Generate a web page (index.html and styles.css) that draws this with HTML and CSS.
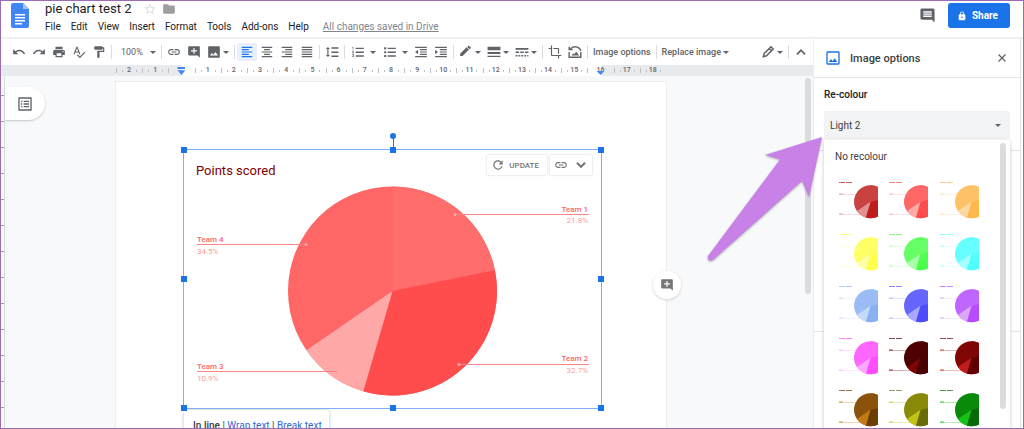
FILE: index.html
```html
<!DOCTYPE html>
<html lang="en">
<head>
	<meta charset="UTF-8">
	<title>pie chart test 2</title>
	<link rel="stylesheet" href="styles.css">
</head>
<body>
	<svg class="sprite" aria-hidden="true">
		<symbol id="undo" viewBox="0 0 24 24"><path d="M12.500 8c-2.650 0-5.050.990-6.900 2.600L2 7v9h9l-3.620-3.620c1.390-1.160 3.160-1.880 5.120-1.880 3.540 0 6.550 2.310 7.600 5.500l2.370-.780C21.080 11.030 17.150 8 12.500 8z"/></symbol>
		<symbol id="redo" viewBox="0 0 24 24"><path d="M18.400 10.600C16.550 8.990 14.150 8 11.500 8c-4.650 0-8.580 3.030-9.960 7.220L3.900 16c1.050-3.190 4.050-5.500 7.600-5.500 1.950 0 3.730.720 5.120 1.880L13 16h9V7l-3.600 3.600z"/></symbol>
		<symbol id="print" viewBox="0 0 24 24"><path d="M19 8H5c-1.660 0-3 1.340-3 3v6h4v4h12v-4h4v-6c0-1.660-1.340-3-3-3zm-3 11H8v-5h8v5zm3-7c-.550 0-1-.450-1-1s.450-1 1-1 1 .450 1 1-.450 1-1 1zm-1-9H6v4h12V3z"/></symbol>
		<symbol id="spell" viewBox="0 0 24 24"><path d="M12.450 16h2.090L9.430 3H7.570L2.460 16h2.090l1.120-3h5.640l1.140 3zm-6.020-5L8.500 5.480 10.570 11H6.430zm15.160.590l-8.090 8.090L9.830 16l-1.410 1.410 5.090 5.090L23 13l-1.410-1.410z"/></symbol>
		<symbol id="paint" viewBox="0 0 24 24"><path d="M18 4V3c0-.550-.450-1-1-1H5c-.550 0-1 .450-1 1v4c0 .550.450 1 1 1h12c.550 0 1-.450 1-1V6h1v4H9v11c0 .550.450 1 1 1h2c.550 0 1-.450 1-1v-9h8V4h-3z"/></symbol>
		<symbol id="link" viewBox="0 0 24 24"><path d="M3.900 12c0-1.710 1.390-3.100 3.100-3.100h4V7H7c-2.760 0-5 2.240-5 5s2.240 5 5 5h4v-1.900H7c-1.710 0-3.100-1.390-3.100-3.100zM8 13h8v-2H8v2zm9-6h-4v1.900h4c1.710 0 3.100 1.390 3.100 3.100s-1.390 3.100-3.100 3.100h-4V17h4c2.760 0 5-2.240 5-5s-2.240-5-5-5z"/></symbol>
		<symbol id="add-comment" viewBox="0 0 24 24"><path d="M22 4c0-1.100-.900-2-2-2H4c-1.100 0-2 .900-2 2v12c0 1.100.900 2 2 2h14l4 4V4zM17 11h-4v4h-2v-4H7V9h4V5h2v4h4v2z"/></symbol>
		<symbol id="comment" viewBox="0 0 24 24"><path d="M22 4c0-1.100-.900-2-2-2H4c-1.100 0-2 .900-2 2v12c0 1.100.900 2 2 2h14l4 4V4zM18 14H6v-2h12v2zm0-3H6V9h12v2zm0-3H6V6h12v2z"/></symbol>
		<symbol id="image" viewBox="0 0 24 24"><path d="M22 20V4c0-1.100-.900-2-2-2H4c-1.100 0-2 .900-2 2v16c0 1.100.900 2 2 2h16c1.100 0 2-.900 2-2zM8.500 13.500l2.500 3L14.500 12l4.500 6H5l3.500-4.500z"/></symbol>
		<symbol id="image-outline" viewBox="0 0 24 24"><path d="M20 4H4v16h16V4zm0-2a2 2 0 0 1 2 2v16a2 2 0 0 1-2 2H4a2 2 0 0 1-2-2V4a2 2 0 0 1 2-2h16zM5.500 18l3.500-4.500 2.500 3 3-4 4 5.500z"/></symbol>
		<symbol id="align-left" viewBox="0 0 24 24"><path d="M3 3h18v2H3zM3 7h12v2H3zM3 11h18v2H3zM3 15h12v2H3zM3 19h18v2H3z"/></symbol>
		<symbol id="align-center" viewBox="0 0 24 24"><path d="M3 3h18v2H3zM7 7h10v2H7zM3 11h18v2H3zM7 15h10v2H7zM3 19h18v2H3z"/></symbol>
		<symbol id="align-right" viewBox="0 0 24 24"><path d="M3 3h18v2H3zM9 7h12v2H9zM3 11h18v2H3zM9 15h12v2H9zM3 19h18v2H3z"/></symbol>
		<symbol id="align-justify" viewBox="0 0 24 24"><path d="M3 3h18v2H3zM3 7h18v2H3zM3 11h18v2H3zM3 15h18v2H3zM3 19h18v2H3z"/></symbol>
		<symbol id="spacing" viewBox="0 0 24 24"><path d="M6 7h2.500L5 3.500 1.500 7H4v10H1.500L5 20.500 8.500 17H6V7zM11 4h12v2.500H11zM11 11h12v2.500H11zM11 18h12v2.500H11z"/></symbol>
		<symbol id="numbers" viewBox="0 0 24 24"><path d="M2 17h2v.500H3v1h1v.500H2v1h3v-4H2v1zm1-9h1V4H2v1h1v3zm-1 3h1.800L2 13.100v.900h3v-1H3.200L5 10.900V10H2v1zM8 4.500h14v2.500H8zM8 11h14v2.500H8zM8 17.500h14V20H8z"/></symbol>
		<symbol id="bullets" viewBox="0 0 24 24"><path d="M2 4h3.500v3.500H2zM2 10.500h3.500V14H2zM2 17h3.500v3.500H2zM8 4.500h14V7H8zM8 11h14v2.500H8zM8 17.500h14V20H8z"/></symbol>
		<symbol id="outdent" viewBox="0 0 24 24"><path d="M2 3h20v2H2zM10 7h12v2H10zM10 11h12v2H10zM10 15h12v2H10zM2 19h20v2H2zM7 8v8l-5-4z"/></symbol>
		<symbol id="indent" viewBox="0 0 24 24"><path d="M2 3h20v2H2zM10 7h12v2H10zM10 11h12v2H10zM10 15h12v2H10zM2 19h20v2H2zM2 8v8l5-4z"/></symbol>
		<symbol id="pencil" viewBox="0 0 24 24"><path d="M2 15v4h4L17 8l-4-4L2 15zM20 5.500c.500-.500.500-1 0-1.500L17.500 1.500c-.500-.500-1-.500-1.500 0l-2 1.800 4 4 2-1.800z"/></symbol>
		<symbol id="pen" viewBox="0 0 24 24"><path d="M4 20l1.500-5.500L17 3l4 4L9.500 18.500zM14 6l4 4" fill="none" stroke="currentColor" stroke-width="2.500"/></symbol>
		<symbol id="weight" viewBox="0 0 24 24"><path d="M1 3h22v6H1zM1 12h22v3.500H1zM1 18.500h22v2H1z"/></symbol>
		<symbol id="dash" viewBox="0 0 24 24"><path d="M1 5h22v3H1zM1 11h6v2.500H1zM9 11h6v2.500H9zM17 11h6v2.500h-6zM1 17h3v2.500H1zM6 17h3v2.500H6zM11 17h3v2.500h-3zM16 17h3v2.500h-3zM21 17h2v2.500h-2z"/></symbol>
		<symbol id="crop" viewBox="0 0 24 24"><path d="M17 15h2V7c0-1.100-.900-2-2-2H9v2h8v8zM7 17V1H5v4H1v2h4v10c0 1.100.900 2 2 2h10v4h2v-4h4v-2H7z"/></symbol>
		<symbol id="reset" viewBox="0 0 24 24"><path d="M2 12v9h20v-9M2 9V3M2 8h6M4 7a10 9 0 0 1 18 3" fill="none" stroke="currentColor" stroke-width="2.400"/><path d="M6 18l3-4 2 2 3-5 5 7z"/></symbol>
		<symbol id="folder" viewBox="0 0 24 24"><path d="M10 4H4c-1.100 0-2 .900-2 2v12c0 1.100.900 2 2 2h16c1.100 0 2-.900 2-2V8c0-1.100-.900-2-2-2h-8l-2-2z"/></symbol>
		<symbol id="star" viewBox="0 0 24 24"><path d="M22 9.240l-7.190-.620L12 2 9.190 8.630 2 9.240l5.460 4.730L5.820 21 12 17.270 18.180 21l-1.630-7.030L22 9.240zM12 15.400l-3.760 2.270 1-4.280-3.320-2.880 4.380-.380L12 6.100l1.710 4.040 4.380.380-3.320 2.880 1 4.280L12 15.400z"/></symbol>
		<symbol id="lock" viewBox="0 0 24 24"><path d="M18 8h-1V6c0-2.760-2.240-5-5-5S7 3.240 7 6v2H6c-1.100 0-2 .900-2 2v10c0 1.100.900 2 2 2h12c1.100 0 2-.900 2-2V10c0-1.100-.900-2-2-2zm-6 9c-1.100 0-2-.900-2-2s.900-2 2-2 2 .900 2 2-.900 2-2 2zm3.100-9H8.900V6c0-1.710 1.390-3.100 3.100-3.100 1.710 0 3.100 1.390 3.100 3.100v2z"/></symbol>
		<symbol id="refresh" viewBox="0 0 24 24"><path d="M17.650 6.350C16.200 4.900 14.210 4 12 4c-4.420 0-8 3.580-8 8s3.580 8 8 8c3.730 0 6.840-2.550 7.730-6h-2.080c-.820 2.330-3.040 4-5.650 4-3.310 0-6-2.690-6-6s2.690-6 6-6c1.660 0 3.140.690 4.220 1.780L13 11h7V4l-2.350 2.350z"/></symbol>
		<symbol id="close" viewBox="0 0 24 24"><path d="M6 6l12 12M18 6L6 18" fill="none" stroke="currentColor" stroke-width="2.200"/></symbol>
		<symbol id="up" viewBox="0 0 24 24"><path d="M5 16l7-7 7 7" fill="none" stroke="currentColor" stroke-width="3"/></symbol>
		<symbol id="down" viewBox="0 0 24 24"><path d="M5 8l7 7 7-7" fill="none" stroke="currentColor" stroke-width="3.500"/></symbol>
		<symbol id="outline" viewBox="0 0 24 24"><path d="M3 3h18v18H3z" fill="none" stroke="currentColor" stroke-width="2"/><path d="M6 7h2v2H6zM6 11h2v2H6zM6 15h2v2H6zM10 7h8v2h-8zM10 11h8v2h-8zM10 15h8v2h-8z"/></symbol>
		<!-- right edge of the pie is cut by the thumbnail -->
		<symbol id="thumb" viewBox="0 0 39 40">
			<circle class="s4" cx="31.500" cy="21.700" r="16.500"/>
			<path class="s1" d="M31.500 21.700V5.200A16.500 16.500 0 0 1 47.700 18.400z"/>
			<path class="s2" d="M31.500 21.700L47.700 18.400A16.500 16.500 0 0 1 26.900 37.500z"/>
			<path class="s3" d="M31.500 21.700L26.900 37.500A16.500 16.500 0 0 1 17.900 31.100z"/>
			<path class="s-title" d="M0 2.500h13"/>
			<path class="s-line" d="M0 14.500h17M0 34.500h22"/>
			<path class="s-name" d="M0 14h4M0 34h4"/>
		</symbol>
	</svg>

	<header class="header">
		<svg class="logo" viewBox="0 0 18 25"><path fill="#4285f4" d="M2 0h10l6 6v17a2 2 0 0 1-2 2H2a2 2 0 0 1-2-2V2a2 2 0 0 1 2-2z"/><path fill="#a1c2fa" d="M12 0l6 6h-6z"/><path fill="#fff" d="M4 11h10v1.500H4zM4 14h10v1.500H4zM4 17h10v1.500H4zM4 20h7v1.500H4z"/></svg>
		<div class="doc">
			<div class="title-row">
				<h1 class="title">pie chart test 2</h1>
				<button class="mark star" aria-label="Star"><svg class="icon"><use href="#star"/></svg></button>
				<button class="mark" aria-label="Move to folder"><svg class="icon"><use href="#folder"/></svg></button>
			</div>
			<nav class="menu">
				<button>File</button>
				<button>Edit</button>
				<button>View</button>
				<button>Insert</button>
				<button>Format</button>
				<button>Tools</button>
				<button>Add-ons</button>
				<button>Help</button>
				<a class="saved" href="#">All changes saved in Drive</a>
			</nav>
		</div>
		<div class="actions">
			<button class="comments" aria-label="Comments"><svg class="icon"><use href="#comment"/></svg></button>
			<button class="share"><svg class="icon"><use href="#lock"/></svg>Share</button>
		</div>
	</header>

	<div class="main">
		<div class="editor">
			<div class="toolbar">
				<button class="tool" aria-label="Undo"><svg class="icon"><use href="#undo"/></svg></button>
				<button class="tool" aria-label="Redo"><svg class="icon"><use href="#redo"/></svg></button>
				<button class="tool" aria-label="Print"><svg class="icon"><use href="#print"/></svg></button>
				<button class="tool" aria-label="Spelling"><svg class="icon"><use href="#spell"/></svg></button>
				<button class="tool" aria-label="Paint format"><svg class="icon"><use href="#paint"/></svg></button>
				<span class="sep"></span>
				<span class="zoom"><select aria-label="Zoom"><option>100%</option></select><i class="caret"></i></span>
				<span class="sep"></span>
				<button class="tool" aria-label="Insert link"><svg class="icon"><use href="#link"/></svg></button>
				<button class="tool" aria-label="Add comment"><svg class="icon"><use href="#add-comment"/></svg></button>
				<button class="tool tool-drop" aria-label="Insert image"><svg class="icon"><use href="#image"/></svg><i class="caret"></i></button>
				<span class="sep"></span>
				<button class="tool active" aria-label="Left align"><svg class="icon"><use href="#align-left"/></svg></button>
				<button class="tool" aria-label="Centre align"><svg class="icon"><use href="#align-center"/></svg></button>
				<button class="tool" aria-label="Right align"><svg class="icon"><use href="#align-right"/></svg></button>
				<button class="tool" aria-label="Justify"><svg class="icon"><use href="#align-justify"/></svg></button>
				<span class="sep"></span>
				<button class="tool" aria-label="Line spacing"><svg class="icon"><use href="#spacing"/></svg></button>
				<span class="sep"></span>
				<button class="tool tool-list" aria-label="Numbered list"><svg class="icon"><use href="#numbers"/></svg><i class="caret"></i></button>
				<button class="tool tool-list" aria-label="Bulleted list"><svg class="icon"><use href="#bullets"/></svg><i class="caret"></i></button>
				<button class="tool" aria-label="Decrease indent"><svg class="icon"><use href="#outdent"/></svg></button>
				<button class="tool" aria-label="Increase indent"><svg class="icon"><use href="#indent"/></svg></button>
				<span class="sep"></span>
				<button class="tool tool-drop" aria-label="Border colour"><svg class="icon"><use href="#pencil"/></svg><i class="caret"></i></button>
				<button class="tool tool-drop" aria-label="Border weight"><svg class="icon"><use href="#weight"/></svg><i class="caret"></i></button>
				<button class="tool tool-drop" aria-label="Border dash"><svg class="icon"><use href="#dash"/></svg><i class="caret"></i></button>
				<span class="sep"></span>
				<button class="tool" aria-label="Crop"><svg class="icon"><use href="#crop"/></svg></button>
				<button class="tool" aria-label="Reset image"><svg class="icon"><use href="#reset"/></svg></button>
				<span class="sep"></span>
				<button class="tool tool-text">Image options</button>
				<span class="sep"></span>
				<button class="tool tool-text">Replace image<i class="caret"></i></button>
				<span class="space"></span>
				<button class="tool tool-drop" aria-label="Editing mode"><svg class="icon"><use href="#pen"/></svg><i class="caret"></i></button>
				<span class="sep"></span>
				<button class="tool" aria-label="Hide menus"><svg class="icon"><use href="#up"/></svg></button>
			</div>

			<div class="ruler">
				<ol class="scale">
					<li class="out">2</li><li class="out">1</li><li class="start"><i class="indent"></i></li>
					<li>1</li><li>2</li><li>3</li><li>4</li><li>5</li><li>6</li><li>7</li><li>8</li>
					<li>9</li><li>10</li><li>11</li><li>12</li><li>13</li><li>14</li><li>15</li>
					<li class="end">16<i class="indent"></i></li><li class="out">17</li><li class="out">18</li>
				</ol>
			</div>

			<div class="canvas">
				<div class="v-ruler"></div>
				<div class="gutter">
					<button class="outline-btn" aria-label="Show outline"><svg class="icon"><use href="#outline"/></svg></button>
				</div>
				<div class="page">
					<div class="chart">
						<svg class="pie" viewBox="0 0 417 258">
							<circle fill="#ff6666" cx="208.500" cy="141" r="104.500"/>
							<path fill="#ff6d6d" d="M208.500 141V36.500A104.500 104.500 0 0 1 310.900 120.200z"/>
							<path fill="#ff4d4d" d="M208.500 141L310.900 120.200A104.500 104.500 0 0 1 179.300 241.300z"/>
							<path fill="#ffa8a8" d="M208.500 141L179.300 241.300A104.500 104.500 0 0 1 122.500 200.300z"/>
							<g stroke="#ff8585">
								<path d="M272 64.500H405M276 214.500H405M13 94.500H122M13 221.500H152"/>
							</g>
							<g fill="#ffa8a8">
								<circle cx="271" cy="64.500" r="1.500"/><circle cx="275" cy="214.500" r="1.500"/><circle cx="122" cy="94.500" r="1.500"/>
							</g>
							<circle fill="#ff8585" cx="152" cy="221.500" r="1"/>
							<text class="pie-title" x="12" y="25">Points scored</text>
							<text class="pie-name" x="13" y="92">Team 4</text>
							<text class="pie-value" x="13" y="104">34.5%</text>
							<text class="pie-name" x="13" y="219">Team 3</text>
							<text class="pie-value" x="13" y="231">10.9%</text>
							<text class="pie-name right" x="404" y="62">Team 1</text>
							<text class="pie-value right" x="404" y="73">21.8%</text>
							<text class="pie-name right" x="404" y="211">Team 2</text>
							<text class="pie-value right" x="404" y="223">32.7%</text>
						</svg>
						<i class="stem"></i>
						<i class="handle rotate"></i>
						<i class="handle top left-side"></i><i class="handle top mid"></i><i class="handle top right-side"></i>
						<i class="handle middle left-side"></i><i class="handle middle right-side"></i>
						<i class="handle bottom left-side"></i><i class="handle bottom mid"></i><i class="handle bottom right-side"></i>
						<div class="chart-tools">
							<button class="chip"><svg class="icon"><use href="#refresh"/></svg>UPDATE</button>
							<button class="chip" aria-label="Linked chart options"><svg class="icon"><use href="#link"/></svg><svg class="icon"><use href="#down"/></svg></button>
						</div>
					</div>
					<div class="wrap-options"><b>In line</b> | <a href="#">Wrap text</a> | <a href="#">Break text</a></div>
					<button class="add-comment" aria-label="Add comment"><svg class="icon"><use href="#add-comment"/></svg></button>
				</div>
				<i class="scrollbar"></i>
			</div>
		</div>

		<aside class="panel">
			<div class="panel-head">
				<svg class="icon"><use href="#image-outline"/></svg>
				<h2>Image options</h2>
				<button aria-label="Close"><svg class="icon"><use href="#close"/></svg></button>
			</div>
			<div class="section recolour">
				<label for="recolour">Re-colour</label>
				<div class="select">
					<select id="recolour"><option>Light 2</option></select><i class="caret"></i>
					<div class="dropdown">
						<button class="none">No recolour</button>
						<div class="thumbs">
							<button class="c-berry" aria-label="Berry"><svg><use href="#thumb"/></svg></button>
							<button class="c-red" aria-label="Red"><svg><use href="#thumb"/></svg></button>
							<button class="c-orange" aria-label="Orange"><svg><use href="#thumb"/></svg></button>
							<button class="c-yellow" aria-label="Yellow"><svg><use href="#thumb"/></svg></button>
							<button class="c-green" aria-label="Green"><svg><use href="#thumb"/></svg></button>
							<button class="c-cyan" aria-label="Cyan"><svg><use href="#thumb"/></svg></button>
							<button class="c-sky" aria-label="Cornflower"><svg><use href="#thumb"/></svg></button>
							<button class="c-blue" aria-label="Blue"><svg><use href="#thumb"/></svg></button>
							<button class="c-purple" aria-label="Purple"><svg><use href="#thumb"/></svg></button>
							<button class="c-pink" aria-label="Magenta"><svg><use href="#thumb"/></svg></button>
							<button class="c-maroon" aria-label="Dark berry"><svg><use href="#thumb"/></svg></button>
							<button class="c-dark-red" aria-label="Dark red"><svg><use href="#thumb"/></svg></button>
							<button class="c-brown" aria-label="Dark orange"><svg><use href="#thumb"/></svg></button>
							<button class="c-olive" aria-label="Dark yellow"><svg><use href="#thumb"/></svg></button>
							<button class="c-dark-green" aria-label="Dark green"><svg><use href="#thumb"/></svg></button>
						</div>
						<i class="scrollbar"></i>
					</div>
				</div>
			</div>
			<div class="section adjust"></div>
		</aside>

		<svg class="arrow" viewBox="0 0 118 128"><path d="M116 2L59 20l15 4.500L2 121c-1 4 2 6 5 4L96 46l7 16z"/></svg>
	</div>
</body>
</html>
```
FILE: styles.css
```css
*{
	box-sizing: border-box;
	margin: 0;
	padding: 0;
}
body{
	display: flex;
	flex-direction: column;
	height: 100vh;
	overflow: hidden;
	border: 1px solid #9b6bb5;
	background: #fff;
	color: #3c4043;
	font-family: Roboto, "Liberation Sans", sans-serif;
	font-size: 10px;
}
button, select{
	border: 0;
	background: none;
	color: inherit;
	font: inherit;
}
select{
	appearance: none;
}
.sprite{
	position: absolute;
	width: 0;
	height: 0;
}
.icon{
	display: block;
	flex: none;
	width: 14px;
	height: 14px;
	fill: currentColor;
}
.caret{
	flex: none;
	border: 3px solid transparent;
	border-top-color: #5f6368;
	border-bottom: 0;
}

/* header */
.header{
	display: flex;
	flex: none;
	height: 38px;
	padding-left: 10px;
	padding-right: 13px;
	border-bottom: 2px solid #eff0f1;
}
.logo{
	flex: none;
	width: 18px;
	height: 25px;
	margin-top: 2px;
}
.doc{
	margin-left: 16px;
}
.title-row{
	display: flex;
	align-items: center;
	height: 15px;
}
.title{
	margin-right: 12px;
	color: #202124;
	font-size: 13px;
	font-weight: 400;
	line-height: 15px;
}
.mark{
	margin-right: 5px;
	color: #9e9e9e;
}
.star{
	color: #dadce0;
}
.menu{
	display: flex;
	gap: 10px;
	margin-top: 4px;
	line-height: 14px;
	white-space: nowrap;
}
.menu button{
	color: #202124;
}
.saved{
	margin-left: 4px;
	color: #80868b;
}
.actions{
	display: flex;
	align-items: center;
	gap: 12px;
	height: 25px;
	margin-top: 2px;
	margin-left: auto;
}
.comments{
	color: #5f6368;
}
.comments .icon{
	width: 17px;
	height: 17px;
}
.share{
	display: flex;
	align-items: center;
	gap: 5px;
	height: 25px;
	padding: 0 12px 0 9px;
	border-radius: 3px;
	background: #1a73e8;
	color: #fff;
	font-weight: 700;
}
.share .icon{
	width: 10px;
	height: 10px;
}

.main{
	display: flex;
	flex: 1;
	min-height: 0;
	overflow: hidden;
	position: relative;
}
.editor{
	display: flex;
	flex: 1;
	flex-direction: column;
	min-width: 0;
}

/* toolbar */
.toolbar{
	display: flex;
	flex: none;
	align-items: center;
	height: 26px;
	padding: 0 2px 0 8px;
	color: #5f6368;
}
.tool{
	display: flex;
	flex: none;
	align-items: center;
	justify-content: center;
	width: 20px;
	height: 18px;
	border-radius: 2px;
	white-space: nowrap;
}
.active{
	background: #e8f0fe;
	color: #1a73e8;
}
.tool-drop{
	gap: 2px;
	width: 28px;
}
.tool-list{
	gap: 5px;
	width: 32px;
}
.tool-text{
	gap: 2px;
	width: auto;
	padding: 0 3px;
	font-size: 9px;
	font-weight: 500;
}
.sep{
	flex: none;
	width: 1px;
	height: 14px;
	margin: 0 2px;
	background: #dadce0;
}
.space{
	flex: 1;
}
.zoom{
	display: flex;
	align-items: center;
	width: 45px;
	padding-left: 7px;
}
.zoom select{
	width: 29px;
	font-size: 9px;
}

/* ruler */
.ruler{
	flex: none;
	height: 11px;
	padding-left: 115px;
	background: #e8eaed;
}
.scale{
	display: flex;
	width: 550px;
	list-style: none;
}
.scale li{
	flex: 1;
	position: relative;
	height: 11px;
	background:
		linear-gradient(#bdc1c6, #bdc1c6) 0 3px / 1px 5px no-repeat,
		linear-gradient(#bdc1c6, #bdc1c6) 6px 5px / 1px 2px no-repeat,
		linear-gradient(#bdc1c6, #bdc1c6) 20px 5px / 1px 2px no-repeat,
		#fff;
	color: #5f6368;
	font-size: 7px;
	font-weight: 500;
	line-height: 11px;
	text-align: center;
}
.scale .out{
	background-color: #e8eaed;
}
.scale .start, .scale .end{
	background-position: 0 3px, 0 0;
	background-repeat: no-repeat;
	background-size: 1px 5px, 100% 100%;
}
.scale .start{
	background-image: linear-gradient(#bdc1c6, #bdc1c6), linear-gradient(90deg, #e8eaed 50%, #fff 50%);
}
.scale .end{
	background-image: linear-gradient(#bdc1c6, #bdc1c6), linear-gradient(90deg, #fff 50%, #e8eaed 50%);
}
.indent{
	position: absolute;
	left: 50%;
	bottom: 1px;
	width: 8px;
	height: 8px;
	margin-left: -4px;
	background: #4285f4;
	clip-path: polygon(0 0, 100% 0, 100% 25%, 0 25%, 0 40%, 100% 40%, 50% 100%, 0 40%);
}
.end .indent{
	height: 4px;
	clip-path: polygon(0 0, 100% 0, 50% 100%);
}

/* document */
.canvas{
	display: flex;
	flex: 1;
	position: relative;
	min-height: 0;
	overflow: hidden;
	background: #f8f9fa;
}
.v-ruler{
	flex: none;
	width: 4px;
	border-right: 1px solid #dadce0;
	background: repeating-linear-gradient(#f8f9fa 0 19px, #9aa0a6 19px 20px, #f8f9fa 20px 26px);
}
.gutter{
	flex: none;
	width: 110px;
	padding-top: 11px;
}
.outline-btn{
	display: flex;
	align-items: center;
	justify-content: center;
	width: 40px;
	height: 33px;
	border-radius: 0 17px 17px 0;
	background: #fff;
	box-shadow: 0 1px 2px #c4c7ca;
	color: #5f6368;
}
.outline-btn .icon{
	width: 16px;
	height: 16px;
}
.page{
	flex: none;
	position: relative;
	width: 552px;
	margin-top: 5px;
	padding: 68px 65px 0 68px;
	border: 1px solid #eceef0;
	border-bottom: 0;
	background: #fff;
}
.chart{
	position: relative;
	outline: 1px solid #7eaef5;
	background: #fff;
}
.pie{
	display: block;
	width: 100%;
}
.pie-title{
	fill: #800000;
	font-size: 13px;
}
.pie-name{
	fill: #ff6666;
	font-size: 8px;
	font-weight: 500;
}
.pie-value{
	fill: #ff9b9b;
	font-size: 8px;
}
.right{
	text-anchor: end;
}
.handle{
	position: absolute;
	width: 6px;
	height: 6px;
	margin: -3px;
	background: #1a73e8;
}
.top{
	top: 0;
}
.middle{
	top: 50%;
}
.bottom{
	top: 100%;
}
.left-side{
	left: 0;
}
.mid, .rotate, .stem{
	left: 50%;
}
.right-side{
	left: 100%;
}
.rotate{
	top: -14px;
	border-radius: 50%;
}
.stem{
	position: absolute;
	top: -14px;
	width: 1px;
	height: 14px;
	background: #1a73e8;
}
.chart-tools{
	display: flex;
	gap: 3px;
	position: absolute;
	top: 5px;
	right: 9px;
}
.chip{
	display: flex;
	align-items: center;
	gap: 4px;
	height: 20px;
	padding: 0 8px 0 4px;
	border-radius: 1px;
	background: #fff;
	box-shadow: 0 0 2px #bdc1c6;
	color: #757575;
	font-size: 8px;
	font-weight: 500;
}
.chip:last-child{
	gap: 6px;
	padding: 0 4px;
}
.wrap-options{
	width: 145px;
	height: 32px;
	margin-top: 2px;
	padding: 0 9px;
	border-radius: 3px;
	background: #fff;
	box-shadow: 0 0 4px #bdc1c6;
	line-height: 32px;
	white-space: nowrap;
}
.wrap-options b{
	font-weight: 500;
}
.wrap-options a{
	color: #3367d6;
	text-decoration: none;
}
.add-comment{
	display: flex;
	align-items: center;
	justify-content: center;
	position: absolute;
	top: 189px;
	right: -15px;
	width: 28px;
	height: 28px;
	border-radius: 50%;
	background: #fff;
	box-shadow: 0 1px 3px #d0d3d6;
	color: #757575;
}
.scrollbar{
	position: absolute;
	top: 2px;
	right: 2px;
	width: 6px;
	height: 216px;
	border-radius: 3px;
	background: #dadce0;
}

/* side panel */
.panel{
	flex: none;
	width: 208px;
	margin-right: 2px;
	border-left: 1px solid #eceef0;
	border-right: 1px solid #dfe1e5;
	background: #fff;
}
.panel-head{
	display: flex;
	align-items: center;
	height: 39px;
	padding: 0 11px;
	border-bottom: 1px solid #e3e5e8;
}
.panel-head .icon{
	width: 16px;
	height: 16px;
	color: #1a73e8;
}
.panel-head h2{
	flex: 1;
	margin-left: 9px;
	font-size: 11px;
	font-weight: 500;
}
.panel-head button .icon{
	width: 14px;
	height: 14px;
	color: #5f6368;
}
.section{
	border-bottom: 1px solid #e3e5e8;
}
.recolour{
	padding: 10px 10px 11px;
}
.recolour label{
	display: block;
	color: #202124;
	font-weight: 500;
	line-height: 14px;
}
.adjust{
	height: 181px;
}
.select{
	display: flex;
	align-items: center;
	position: relative;
	height: 28px;
	margin-top: 9px;
	padding-right: 9px;
	border-radius: 2px;
	background: #f1f3f4;
}
.select select{
	flex: 1;
	height: 28px;
	padding-left: 6px;
}
.dropdown{
	position: absolute;
	top: 29px;
	left: 0;
	right: 0;
	height: 320px;
	background: #fff;
	box-shadow: 0 1px 4px #c4c7ca;
}
.none{
	display: block;
	height: 33px;
	padding-left: 11px;
}
.thumbs{
	display: grid;
	grid-template-columns: repeat(3, 1fr);
	row-gap: 12px;
	padding: 7px 20px 0 15px;
}
.thumbs button{
	height: 40px;
	text-align: left;
}
.thumbs svg{
	display: block;
	width: 39px;
	height: 40px;
}
.dropdown .scrollbar{
	top: 3px;
	right: 4px;
	height: 266px;
}
.s1, .s4{
	fill: var(--main);
}
.s2{
	fill: var(--strong);
}
.s3{
	fill: var(--soft);
}
.s-title{
	stroke: var(--strong);
	stroke-dasharray: 6 1;
	opacity: .7;
}
.s-line{
	stroke: var(--soft);
	opacity: .3;
}
.s-name{
	stroke: var(--soft);
	stroke-width: 2;
	opacity: .4;
}
.c-berry{ --main: #c94141; --strong: #c01c1c; --soft: #e09090; }
.c-red{ --main: #ff6666; --strong: #ff4d4d; --soft: #ffa8a8; }
.c-orange{ --main: #ffc266; --strong: #ffb84d; --soft: #fbd9a0; }
.c-yellow{ --main: #ffff66; --strong: #ffff4d; --soft: #ffffa8; }
.c-green{ --main: #66ff66; --strong: #4dff4d; --soft: #a8ffa8; }
.c-cyan{ --main: #66ffff; --strong: #4dffff; --soft: #a8ffff; }
.c-sky{ --main: #9bbcf4; --strong: #8ab2f2; --soft: #c5d9f9; }
.c-blue{ --main: #6666ff; --strong: #4d4dff; --soft: #a8a8ff; }
.c-purple{ --main: #bf66ff; --strong: #b84dff; --soft: #dba8f8; }
.c-pink{ --main: #ff66ff; --strong: #ff4dff; --soft: #ffa8ff; }
.c-maroon{ --main: #4d0000; --strong: #4a0000; --soft: #7a0505; }
.c-dark-red{ --main: #800505; --strong: #600000; --soft: #c01c1c; }
.c-brown{ --main: #8a520a; --strong: #6b3e06; --soft: #c27a16; }
.c-olive{ --main: #8a8a0a; --strong: #6b6b06; --soft: #c2c216; }
.c-dark-green{ --main: #0a8a0a; --strong: #066b06; --soft: #16c216; }

/* pointer drawn over the document and the panel */
.arrow{
	position: absolute;
	top: 96px;
	right: 199px;
	width: 118px;
	height: 128px;
	fill: #c881e6;
	filter: drop-shadow(0 1px 1px #80808099);
	pointer-events: none;
}
```
